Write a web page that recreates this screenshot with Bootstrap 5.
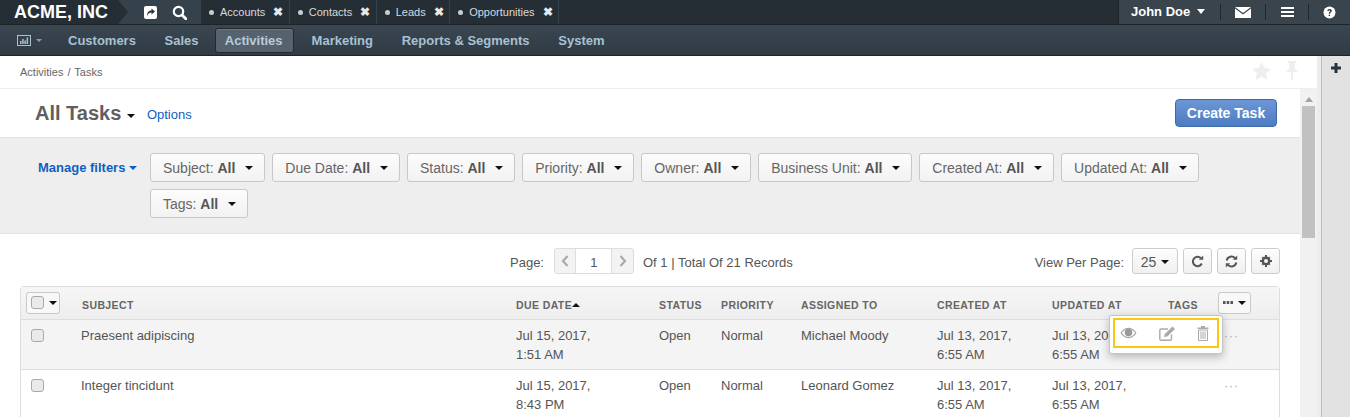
<!DOCTYPE html>
<html lang="en">
<head>
<meta charset="utf-8">
<title>All Tasks</title>
<link href="https://cdn.jsdelivr.net/npm/bootstrap@5.3.0/dist/css/bootstrap.min.css" rel="stylesheet">
<style>
html,body{height:417px;overflow:hidden}
body{font-family:"Liberation Sans",Arial,sans-serif;font-size:13px;color:#4a4a4a;background:#fff}
.topbar{height:25px;background:#36424b;border-bottom:1px solid #1d2429}
.brandwrap{width:129px;flex:none;height:24px}
.brand{height:24px;background:#262e35;color:#fff;font-weight:700;font-size:18px;line-height:24px;padding-left:14px;clip-path:polygon(0 0,118px 0,128px 50%,118px 100%,0 100%)}
.quick{width:72px;flex:none;gap:15px;padding-left:15px;color:#fff}
.tabbar{background:#262e35;height:24px}
.tabitem{height:24px;color:#d6dade;font-size:11px;line-height:24px;padding:0 5.5px 0 8px;border-right:1px solid #36424b;white-space:nowrap;gap:6px}
.dot{width:5px;height:5px;border-radius:50%;background:#c8cdd1;flex:none}
.xmark{color:#e5e7e9;font-weight:700;font-size:12px;margin-left:2px}
.userzone{margin-left:auto;width:232px;height:24px;background:#39444d;border-left:1px solid #1d2429;color:#fff;flex:none}
.tabfill{flex:1;height:24px;background:#262e35}
.username{width:101px;padding-left:12px;font-weight:700;font-size:13px;line-height:24px}
.caretw{display:inline-block;border:4.5px solid transparent;border-top:5px solid currentColor;border-bottom:0;vertical-align:2px;margin-left:7px}
.uicon{height:16px;border-left:1px solid #20272d;justify-content:center;align-items:center;display:flex}
.mainnav{height:31px;background:linear-gradient(#3a4650,#303b44);border-bottom:1px solid #1d2429;padding-left:17px}
.navlink{color:#a9c0d2;font-weight:700;font-size:13px;line-height:25px;padding:0 10px;height:25px;margin-right:8.7px;border-radius:3px}
.navlink.cur{background:#56626d;color:#b9cbda;border:1px solid #23292e;line-height:23px;padding:0 10px 0 9px;margin-right:8px;margin-left:-2.5px;box-shadow:inset 0 1px 0 #6a7681}
.shell{height:361px}
.workarea{width:1317px;flex:none;overflow:hidden}
.sideband{width:5px;flex:none;background:#ededed;border-right:1px solid #bdbdbd}
.sidepanel{flex:1;background:#e2e2e2}
.sidepanel svg{display:block;margin:7px auto 0 9px}
.crumbs{height:33px;border-bottom:1px solid #eee;padding-left:20px;font-size:11px;line-height:33px;color:#666;padding-right:18px;word-spacing:1px}
.pinset{gap:14px;margin-top:-3px}
.scrollpane{height:328px}
.pagecol{width:1300px;flex:none}
.scrollgut{width:17px;background:#f1f1f1;flex:none}
.thumbbar{width:13px;height:132px;background:#c1c1c1;margin:4px auto 0}
.uptri{width:0;height:0;border:4px solid transparent;border-bottom:5px solid #a3a3a3;border-top:0;margin:8px auto 0}
.titlerow{height:48px;padding:0 23px 0 35px}
.pagetitle{font-size:20px;font-weight:700;color:#5f5f5f;line-height:1}
.caretd{display:inline-block;border:4px solid transparent;border-top:4.5px solid #111;border-bottom:0;vertical-align:2px}
.optlink{font-size:13px;color:#0f5fc2;margin-left:12px;margin-top:4px}
.createbtn{background:linear-gradient(#6c97d6,#4d7cc2);border:1px solid #3f6aa8;color:#fff;font-weight:700;font-size:14px;width:102px;height:28px;line-height:26px;padding:0;border-radius:4px}
.filterzone{height:97px;background:#eee;border-top:1px solid #e2e2e2;border-bottom:1px solid #e2e2e2;padding:15px 0 0 38px}
.mng{color:#0f5fc2;font-weight:700;font-size:13px;width:112px;line-height:30px;flex:none;white-space:nowrap}
.mng .caretd{border-top-color:#0f5fc2}
.filterset{gap:7px;width:1100px}
.fbtn{height:29px;background:linear-gradient(#fcfcfc,#f2f2f2);border:1px solid #c8c8c8;border-radius:3px;color:#666;font-size:14px;line-height:29px;padding:0 11px 0 12px;white-space:nowrap}
.fbtn b{color:#555}
.fbtn .caretd{margin-left:6px;vertical-align:3px}
.pagerrow{height:52px;padding:14px 20px 0 0;position:relative;font-size:13px;color:#555}
.pagerleft{position:absolute;left:510px;top:14px;line-height:30px;white-space:nowrap}
.pgbox{width:80px;height:26px;border:1px solid #ddd;border-radius:3px;background:#f3f3f3;margin:0 9px 0 10px;vertical-align:top}
.pgnum{width:37px;background:#fff;border:solid #ddd;border-width:0 1px;text-align:center;line-height:27px;color:#555;font-size:13px}
.pgarrow{flex:1}
.perpage{line-height:30px;gap:5px}
.tool{height:26px;width:29px;background:linear-gradient(#fdfdfd,#f0f0f0);border:1px solid #ccc;border-radius:3px;color:#555;font-size:14px;line-height:24px;display:flex;align-items:center;justify-content:center}
.tool.wide{width:46px;margin-left:3px;gap:5px;padding-top:2px}
.gridbox{margin:0 20px;border:1px solid #ddd;border-bottom:0;border-radius:4px 4px 0 0;position:relative;height:140px;overflow:visible}
.tasks{table-layout:fixed;width:1258px;margin:0;color:#555;font-size:13px;--bs-table-bg:transparent}
.tasks th{height:32px;background:linear-gradient(#f6f6f6,#eee);border-bottom:1px solid #ddd;font-size:10.5px;font-weight:700;letter-spacing:.4px;color:#666;text-transform:uppercase;padding:6px 0 0 7px;vertical-align:middle;white-space:nowrap}
.tasks th.subjhead{padding-left:8px}
.tasks td{padding:6px 0 0 7px;height:50px;line-height:19px;vertical-align:top;border-bottom:1px solid #ddd;color:#555;white-space:normal}
.tasks tr.hot td{background:#f4f4f4}
.tasks th.cbcell{padding:0 0 0 5px}
.tasks th.menucell{padding:0}
.tasks td.cbcell{padding-left:10px}
.tasks td.dotcell{padding-left:6px}
.tick{display:block;width:13px;height:13px;border:1px solid #aaa;border-radius:3px;background:#eaeaea}
td .tick{margin-top:3px}
.selbtn{width:34px;height:22px;border:1px solid #c8c8c8;border-radius:3px;background:#f8f8f8;gap:5px;padding-left:4px}
.dots3{color:#aaa;letter-spacing:1px;font-size:12px;line-height:12px}
.colmenu{width:33px;height:22px;border:1px solid #c8c8c8;border-radius:3px;background:#f8f8f8;gap:5px;justify-content:center}
.popmenu{position:absolute;left:1088px;top:28px;width:114px;height:39px;background:#fff;border:1px solid #c4c4c4;border-radius:3px;box-shadow:0 3px 8px rgba(0,0,0,.25);padding:2px 3px;z-index:5}
.yellowring{height:30px;border:2px solid #f9c80f;justify-content:space-between;padding:0 8px 0 5px;align-items:center}
</style>
</head>
<body>
<div class="topbar d-flex">
  <div class="brandwrap"><div class="brand">ACME, INC</div></div>
  <div class="quick d-flex align-items-center">
    <svg width="13" height="13" viewBox="0 0 13 13"><rect x="0" y="0" width="13" height="13" rx="2" fill="#fff"/><path d="M3 10c0-4 2-5.500 4.500-5.500V2.500l3.500 3-3.500 3V6.500C5.500 6.500 4 7.500 3 10z" fill="#2b343b"/></svg>
    <svg width="15" height="15" viewBox="0 0 15 15"><circle cx="6.500" cy="6.500" r="4.700" fill="none" stroke="#fff" stroke-width="2.200"/><path d="M10 10l3.800 3.800" stroke="#fff" stroke-width="2.800" stroke-linecap="round"/></svg>
  </div>
  <div class="tabbar d-flex">
    <div class="tabitem d-flex align-items-center"><span class="dot"></span>Accounts <span class="xmark">✖</span></div>
    <div class="tabitem d-flex align-items-center"><span class="dot"></span>Contacts <span class="xmark">✖</span></div>
    <div class="tabitem d-flex align-items-center"><span class="dot"></span>Leads <span class="xmark">✖</span></div>
    <div class="tabitem d-flex align-items-center"><span class="dot"></span>Opportunities <span class="xmark">✖</span></div>
  </div>
  <div class="tabfill"></div>
  <div class="userzone d-flex align-items-center">
    <div class="username">John Doe<span class="caretw"></span></div>
    <div class="uicon" style="width:45px"><svg width="16" height="11" viewBox="0 0 16 11"><path d="M0 0h16L8 6z" fill="#fff"/><path d="M0 1.500V11h16V1.500L8 7.500z" fill="#fff"/></svg></div>
    <div class="uicon" style="width:43px"><svg width="13" height="10" viewBox="0 0 13 10"><path d="M0 0h13v2H0zM0 4h13v2H0zM0 8h13v2H0z" fill="#fff"/></svg></div>
    <div class="uicon" style="width:41px"><svg width="13" height="13" viewBox="0 0 13 13"><circle cx="6.500" cy="6.500" r="6" fill="#fff"/><path d="M4.300 5c.1-1.400 1-2.100 2.300-2.100s2.200.7 2.200 1.900c0 1.500-1.700 1.500-1.700 3H5.700c0-2 1.500-2 1.500-2.900 0-.4-.3-.7-.7-.7s-.7.3-.8.8zM5.700 8.700h1.400v1.400H5.700z" fill="#2b343b"/></svg></div>
  </div>
</div>
<nav class="mainnav d-flex align-items-center">
  <svg width="14" height="11" viewBox="0 0 14 11" class="me-1"><rect x=".5" y=".5" width="13" height="10" fill="none" stroke="#a9c0d2"/><path d="M3 6h1.500v3H3zM5.200 4h1.500v5H5.200zM7.400 5.500h1.500V9H7.400zM9.600 2.500h1.500V9H9.600z" fill="#a9c0d2"/></svg>
  <span class="caretw" style="color:#8d9ca8;margin:0 16px 0 1px;border-width:3.500px 3.500px 0"></span>
  <span class="navlink">Customers</span>
  <span class="navlink">Sales</span>
  <span class="navlink cur">Activities</span>
  <span class="navlink">Marketing</span>
  <span class="navlink">Reports &amp; Segments</span>
  <span class="navlink">System</span>
</nav>
<div class="shell d-flex">
  <div class="workarea">
    <div class="crumbs d-flex justify-content-between align-items-center">
      <span>Activities / Tasks</span>
      <span class="pinset d-flex align-items-center">
        <svg width="19" height="18" viewBox="0 0 19 18"><path d="M9.500 0l2.800 6 6.700.8-5 4.500 1.400 6.700-5.900-3.400L3.600 18 5 11.300 0 6.800 6.700 6z" fill="#eeeeee"/></svg>
        <svg width="14" height="19" viewBox="0 0 14 19"><path d="M3 0h8v2H9.800v5.500L13 11H8v8H6v-8H1l3.200-3.500V2H3z" fill="#eeeeee"/></svg>
      </span>
    </div>
    <div class="scrollpane d-flex">
      <div class="pagecol">
        <div class="titlerow d-flex align-items-center justify-content-between">
          <div class="d-flex align-items-center">
            <span class="pagetitle">All Tasks <span class="caretd"></span></span>
            <a class="optlink text-decoration-none" href="#">Options</a>
          </div>
          <button class="createbtn" type="button">Create Task</button>
        </div>
        <div class="filterzone d-flex">
          <div class="mng">Manage filters <span class="caretd"></span></div>
          <div class="filterset d-flex flex-wrap align-content-start">
            <span class="fbtn">Subject: <b>All</b> <span class="caretd"></span></span>
            <span class="fbtn">Due Date: <b>All</b> <span class="caretd"></span></span>
            <span class="fbtn">Status: <b>All</b> <span class="caretd"></span></span>
            <span class="fbtn">Priority: <b>All</b> <span class="caretd"></span></span>
            <span class="fbtn">Owner: <b>All</b> <span class="caretd"></span></span>
            <span class="fbtn">Business Unit: <b>All</b> <span class="caretd"></span></span>
            <span class="fbtn">Created At: <b>All</b> <span class="caretd"></span></span>
            <span class="fbtn">Updated At: <b>All</b> <span class="caretd"></span></span>
            <span class="fbtn">Tags: <b>All</b> <span class="caretd"></span></span>
          </div>
        </div>
        <div class="pagerrow d-flex justify-content-end">
          <div class="pagerleft d-flex">
            <span>Page:</span>
            <div class="pgbox d-flex">
              <span class="pgarrow d-flex align-items-center justify-content-center"><svg width="8" height="12" viewBox="0 0 8 12"><path d="M6.500 1L2 6l4.500 5" fill="none" stroke="#aaa" stroke-width="2.200"/></svg></span>
              <span class="pgnum">1</span>
              <span class="pgarrow d-flex align-items-center justify-content-center"><svg width="8" height="12" viewBox="0 0 8 12"><path d="M1.500 1L6 6l-4.500 5" fill="none" stroke="#aaa" stroke-width="2.200"/></svg></span>
            </div>
            <span>Of 1 | Total Of 21 Records</span>
          </div>
          <div class="perpage d-flex">
            <span>View Per Page:</span>
            <span class="tool wide">25 <span class="caretd"></span></span>
            <span class="tool"><svg width="13" height="13" viewBox="0 0 13 13"><path d="M10.800 8.500A4.700 4.700 0 1 1 9.800 3" fill="none" stroke="#555" stroke-width="2"/><path d="M7.800 4.800h4.400V.4z" fill="#555"/></svg></span>
            <span class="tool"><svg width="13" height="13" viewBox="0 0 13 13"><path d="M1.700 5.500A4.800 4.800 0 0 1 10 3.200" fill="none" stroke="#555" stroke-width="2"/><path d="M7.800 4.800h4.400V.4z" fill="#555"/><path d="M11.300 7.500A4.800 4.800 0 0 1 3 9.800" fill="none" stroke="#555" stroke-width="2"/><path d="M5.200 8.200H.8v4.400z" fill="#555"/></svg></span>
            <span class="tool"><svg width="12" height="12" viewBox="0 0 12 12"><circle cx="6" cy="6" r="3.200" fill="none" stroke="#555" stroke-width="2.400"/><path d="M5 0h2v2H5zM5 10h2v2H5zM0 5h2v2H0zM10 5h2v2h-2zM1.500 3L3 1.500l1 1L2.500 4zM8 2.500l1-1L10.500 3l-1 1zM1.500 9l1-1L4 9.500l-1 1zM8 9.500L9.500 8l1 1L9 10.500z" fill="#555"/></svg></span>
          </div>
        </div>
        <div class="gridbox">
          <table class="tasks table">
            <colgroup><col style="width:53px"><col style="width:435px"><col style="width:143px"><col style="width:62px"><col style="width:80px"><col style="width:136px"><col style="width:115px"><col style="width:116px"><col style="width:57px"><col></colgroup>
            <thead><tr>
              <th class="cbcell"><span class="selbtn d-flex align-items-center"><span class="tick"></span><span class="caretd"></span></span></th>
              <th class="subjhead">Subject</th><th>Due Date<span class="caretd" style="border-top:0;border-bottom:4.5px solid #111;margin-left:0"></span></th><th>Status</th><th>Priority</th><th>Assigned To</th><th>Created At</th><th>Updated At</th><th>Tags</th>
              <th class="menucell"><span class="colmenu d-flex align-items-center"><svg width="10" height="3" viewBox="0 0 10 3"><path d="M0 0h2.500v3H0zM3.700 0h2.500v3H3.700zM7.400 0H10v3H7.400z" fill="#555"/></svg><span class="caretd"></span></span></th>
            </tr></thead>
            <tbody>
              <tr class="hot"><td class="cbcell"><span class="tick"></span></td><td>Praesent adipiscing</td><td>Jul 15, 2017,<br>1:51 AM</td><td>Open</td><td>Normal</td><td>Michael Moody</td><td>Jul 13, 2017,<br>6:55 AM</td><td>Jul 13, 2017,<br>6:55 AM</td><td></td><td class="dotcell"><span class="dots3">···</span></td></tr>
              <tr><td class="cbcell"><span class="tick"></span></td><td>Integer tincidunt</td><td>Jul 15, 2017,<br>8:43 PM</td><td>Open</td><td>Normal</td><td>Leonard Gomez</td><td>Jul 13, 2017,<br>6:55 AM</td><td>Jul 13, 2017,<br>6:55 AM</td><td></td><td class="dotcell"><span class="dots3">···</span></td></tr>
            </tbody>
          </table>
          <div class="popmenu">
            <div class="yellowring d-flex">
              <svg width="17" height="12" viewBox="0 0 18 12"><path d="M.5 6C3 2 6 .5 9 .5S15 2 17.500 6C15 10 12 11.500 9 11.500S3 10 .5 6z" fill="#a8a8a8"/><path d="M2 6C4 3.200 6.500 1.800 9 1.800s5 1.400 7 4.200c-2 2.800-4.500 4.200-7 4.200S4 8.800 2 6z" fill="#fff"/><circle cx="9" cy="5.600" r="4" fill="#999"/></svg>
              <svg width="17" height="15" viewBox="0 0 17 15"><path d="M12.500 8.500V13a1.200 1.200 0 0 1-1.200 1.200H2A1.200 1.200 0 0 1 .8 13V4.200A1.200 1.200 0 0 1 2 3h7" fill="none" stroke="#aaa" stroke-width="1.400"/><path d="M5 11l.8-3L13.500 .5l2.500 2.500L8.300 10.500z" fill="#aaa"/></svg>
              <svg width="12" height="15" viewBox="0 0 12 15"><path d="M4 0h4v1.500h3.500V3H.5V1.500H4z" fill="#aaa"/><path d="M1.500 4h9v10.500h-9z" fill="none" stroke="#aaa"/><path d="M3.500 5.500h1v7.500h-1zM5.500 5.500h1v7.500h-1zM7.500 5.500h1v7.500h-1z" fill="#aaa"/></svg>
            </div>
          </div>
        </div>
      </div>
      <div class="scrollgut">
        <div class="uptri"></div>
        <div class="thumbbar"></div>
      </div>
    </div>
  </div>
  <div class="sideband"></div>
  <div class="sidepanel"><svg width="10" height="10" viewBox="0 0 10 10"><path d="M3.500 0h3v3.500H10v3H6.500V10h-3V6.500H0v-3h3.500z" fill="#2b343b"/></svg></div>
</div>
<script src="https://cdn.jsdelivr.net/npm/bootstrap@5.3.0/dist/js/bootstrap.bundle.min.js"></script>
</body>
</html>
